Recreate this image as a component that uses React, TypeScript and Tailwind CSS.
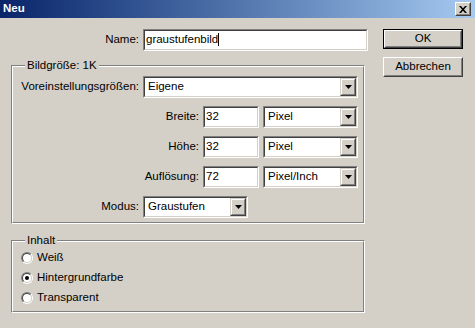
import React from "react";

function Sunken({ className = "", children }: { className?: string; children?: React.ReactNode }) {
  return (
    <div className={"border border-t-[#808080] border-l-[#808080] border-b-white border-r-white flex " + className}>
      <div className="flex-1 flex border border-t-[#404040] border-l-[#404040] border-b-[#d4d0c8] border-r-[#d4d0c8] bg-white min-w-0">
        {children}
      </div>
    </div>
  );
}

function Raised({ className = "", children }: { className?: string; children?: React.ReactNode }) {
  return (
    <div className={"border border-t-white border-l-white border-b-[#404040] border-r-[#404040] flex " + className}>
      <div className="flex-1 flex items-center justify-center border border-t-[#d4d0c8] border-l-[#d4d0c8] border-b-[#808080] border-r-[#808080] bg-[#d4d0c8]">
        {children}
      </div>
    </div>
  );
}

function Arrow() {
  return (
    <svg width="7" height="4" viewBox="0 0 7 4">
      <path d="M0 0h7L3.5 4z" fill="#000" />
    </svg>
  );
}

function Select({ value, className = "" }: { value: string; className?: string }) {
  return (
    <Sunken className={"h-[22px] " + className}>
      <div className="flex-1 flex items-center pl-[3px] leading-none">{value}</div>
      <div className="w-[16px] flex">
        <div className="flex-1 flex border border-t-[#d4d0c8] border-l-[#d4d0c8] border-b-[#404040] border-r-[#404040]">
          <div className="flex-1 flex items-center justify-center border border-t-white border-l-white border-b-[#808080] border-r-[#808080] bg-[#d4d0c8]">
            <Arrow />
          </div>
        </div>
      </div>
    </Sunken>
  );
}

function Input({ value, className = "", cursor = false }: { value: string; className?: string; cursor?: boolean }) {
  return (
    <Sunken className={"h-[22px] " + className}>
      <div className="flex-1 flex items-center pl-[1px] leading-none">
        <span>{value}</span>
        {cursor && <span className="inline-block w-[1px] h-[13px] bg-black" />}
      </div>
    </Sunken>
  );
}

function Group({ title, className = "", children }: { title: string; className?: string; children?: React.ReactNode }) {
  return (
    <div className={"relative border border-t-[#808080] border-l-[#808080] border-b-white border-r-white " + className}>
      <div className="border border-t-white border-l-white border-b-[#808080] border-r-[#808080] h-full flex flex-col">
        {children}
      </div>
      <span className="absolute left-[13px] -top-[7px] px-[2px] bg-[#d4d0c8] leading-[13px]">{title}</span>
    </div>
  );
}

function Radio({ label, checked = false }: { label: string; checked?: boolean }) {
  return (
    <div className="h-[16px] flex items-center gap-[4px]">
      <div className="w-[12px] h-[12px] rounded-full border border-t-[#808080] border-l-[#808080] border-b-white border-r-white flex">
        <div className="flex-1 rounded-full border border-t-[#404040] border-l-[#404040] border-b-[#d4d0c8] border-r-[#d4d0c8] bg-white flex items-center justify-center">
          {checked && <div className="w-[4px] h-[4px] rounded-full bg-black" />}
        </div>
      </div>
      <span className="leading-none">{label}</span>
    </div>
  );
}

export default function App() {
  return (
    <div className="w-[475px] h-[328px] bg-[#d4d0c8] flex flex-col overflow-hidden font-['Liberation_Sans',Arial,sans-serif] text-[11.5px] text-black">
      <div className="h-[18px] flex items-center bg-gradient-to-r from-[#0a246a] to-[#a6caf0] pl-[3px] pr-[4px]">
        <span className="font-bold text-white flex-1 leading-none">Neu</span>
        <Raised className="w-[16px] h-[14px]">
          <svg width="8" height="7" viewBox="0 0 8 7">
            <path d="M0 0h2l2 2.2L6 0h2L5 3.5 8 7H6L4 4.8 2 7H0l3-3.5z" fill="#000" />
          </svg>
        </Raised>
      </div>
      <div className="flex flex-1">
        <div className="ml-[11px] w-[357px] flex flex-col">
          <div className="mt-[11px] h-[21px] flex items-center gap-[4px]">
            <div className="w-[128px] text-right">Name:</div>
            <Input value="graustufenbild" cursor className="w-[225px] h-[21px]" />
          </div>
          <Group title="Bildgröße: 1K" className="mt-[15px] w-[354px]">
            <div className="pt-[9px] pb-[4px] flex flex-col gap-[8px]">
              <div className="flex items-center gap-[4px]">
                <div className="w-[126px] text-right">Voreinstellungsgrößen:</div>
                <Select value="Eigene" className="w-[215px]" />
              </div>
              {[
                ["Breite:", "32", "Pixel"],
                ["Höhe:", "32", "Pixel"],
                ["Auflösung:", "72", "Pixel/Inch"],
              ].map(([l, v, u]) => (
                <div key={l} className="flex items-center gap-[4px]">
                  <div className="w-[186px] text-right">{l}</div>
                  <Input value={v} className="w-[56px]" />
                  <Select value={u} className="w-[95px]" />
                </div>
              ))}
              <div className="flex items-center gap-[4px]">
                <div className="w-[126px] text-right">Modus:</div>
                <Select value="Graustufen" className="w-[105px]" />
              </div>
            </div>
          </Group>
          <Group title="Inhalt" className="mt-[16px] w-[354px]">
            <div className="pt-[8px] pb-[5px] pl-[8px] flex flex-col gap-[4px]">
              <Radio label="Weiß" />
              <Radio label="Hintergrundfarbe" checked />
              <Radio label="Transparent" />
            </div>
          </Group>
        </div>
        <div className="ml-[15px] mt-[11px] w-[80px] flex flex-col gap-[8px]">
          <div className="h-[20px] border border-black flex">
            <Raised className="flex-1">OK</Raised>
          </div>
          <Raised className="h-[20px]">Abbrechen</Raised>
        </div>
      </div>
    </div>
  );
}
